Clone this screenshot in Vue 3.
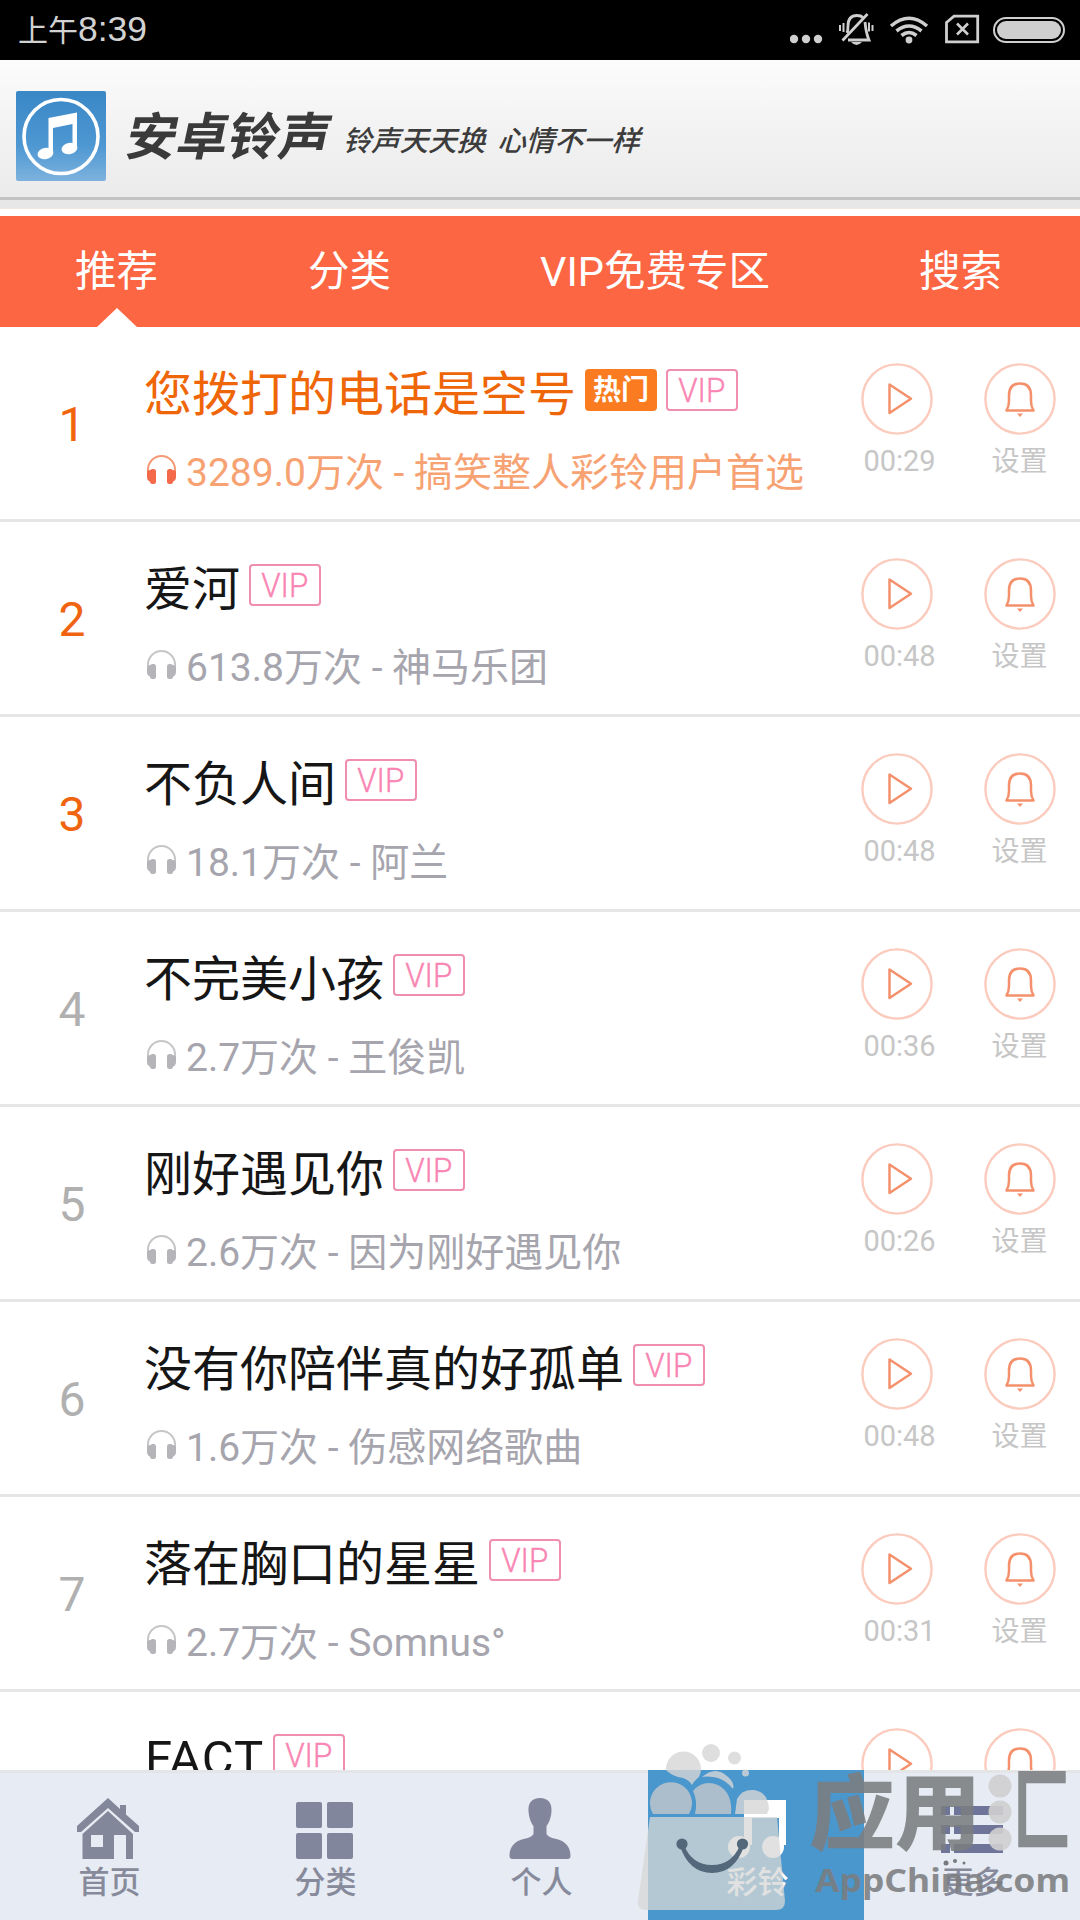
<script setup>
const tabs = ['推荐', '分类', 'VIP免费专区', '搜索']
const songs = [
  { title: '您拨打的电话是空号', plays: '3289.0万次', artist: '搞笑整人彩铃用户首选', time: '00:29', hot: true },
  { title: '爱河', plays: '613.8万次', artist: '神马乐团', time: '00:48' },
  { title: '不负人间', plays: '18.1万次', artist: '阿兰', time: '00:48' },
  { title: '不完美小孩', plays: '2.7万次', artist: '王俊凯', time: '00:36' },
  { title: '刚好遇见你', plays: '2.6万次', artist: '因为刚好遇见你', time: '00:26' },
  { title: '没有你陪伴真的好孤单', plays: '1.6万次', artist: '伤感网络歌曲', time: '00:48' },
  { title: '落在胸口的星星', plays: '2.7万次', artist: 'Somnus°', time: '00:31' },
  { title: 'FACT', latin: true },
]
</script>

<template>
  <div class="screen">
    <div class="status">
      <span class="clock"><span class="ampm">上午</span>8:39</span>
      <svg class="sys" width="290" height="60" viewBox="790 0 290 60" fill="none" stroke="#cfcfcf">
        <g fill="#cfcfcf" stroke="none">
          <circle cx="794" cy="39" r="4.2" /><circle cx="806" cy="39" r="4.2" /><circle cx="818" cy="39" r="4.2" />
          <circle cx="909" cy="40" r="3.400" />
          <path d="M851 42h11q-5.500 6-11 0z" />
        </g>
        <path d="M842.500 40.500l25-26.500" stroke-width="2.800" />
        <path d="M847 33q1-2 1-7 0-10.500 9-10.500 4 0 6 2M865 22q1 11 4 18h-21" stroke-width="2.800" />
        <path d="M843.500 23v9M840 25v6M869 22.500v9M872.500 25v6" stroke-width="2" />
        <path d="M891 26q18-15.500 36 0M896.500 31q12.500-10 25 0M901.500 35.500q7.500-6 15 0" stroke-width="3.600" />
        <path d="M946.500 22.500l7.500-6.300h23.700v25.600h-31.200z" stroke-width="2.800" />
        <path d="M957 23.500l11 11M968 23.500l-11 11" stroke-width="2.600" />
        <rect x="994" y="18" width="70" height="24" rx="12" stroke-width="2" />
        <rect x="997" y="21" width="64" height="18" rx="9" fill="#cfcfcf" stroke="none" />
      </svg>
    </div>

    <header class="brand">
      <svg class="logo" width="90" height="90" viewBox="0 0 90 90">
        <defs>
          <linearGradient id="logoBg" x1="0" y1="0" x2="0" y2="1">
            <stop offset="0" stop-color="#3a87c6" /><stop offset=".6" stop-color="#4d97d2" /><stop offset="1" stop-color="#7db2de" />
          </linearGradient>
        </defs>
        <rect width="90" height="90" rx="2" fill="url(#logoBg)" />
        <circle cx="45" cy="45.500" r="37" fill="none" stroke="#fff" stroke-width="3.600" />
        <g fill="#fff">
          <path d="M32.500 27l28.500-5.500v36h-4.500V33L37 37v25h-4.500z" />
          <ellipse cx="29.500" cy="62.500" rx="8" ry="5.500" transform="rotate(-12 29.500 62.500)" />
          <ellipse cx="53.500" cy="57.500" rx="8" ry="5.500" transform="rotate(-12 53.500 57.500)" />
        </g>
      </svg>
      <h1>安卓铃声</h1>
      <p class="slogan"><span>铃声天天换</span><span>心情不一样</span></p>
    </header>
    <div class="ledge"></div>

    <nav class="tabs">
      <div v-for="(t, i) in tabs" :key="t" class="tab" :class="{ wide: i === 2, active: i === 0 }">{{ t }}</div>
    </nav>

    <main class="list">
      <article v-for="(s, i) in songs" :key="i" class="row" :class="{ first: i === 0 }">
        <div class="rank" :class="{ top: i < 3 }">{{ i < 7 ? i + 1 : '' }}</div>
        <div class="info">
          <div class="title">
            <span :class="{ latin: s.latin }">{{ s.title }}</span>
            <b v-if="s.hot" class="hot">热门</b>
            <i class="vip"><span>VIP</span></i>
          </div>
          <div v-if="s.plays" class="sub">
            <svg width="31" height="31" viewBox="0 0 31 31">
              <path class="band" d="M2 20v-4.500a13.500 13.500 0 0 1 27 0V20" fill="none" stroke-width="2" />
              <g class="cups">
                <path d="M1 18q0-2 4-2v12q-4-1-4-5z" /><rect x="4" y="15" width="6" height="15" rx="2.500" />
                <path d="M30 18q0-2-4-2v12q4-1 4-5z" /><rect x="21" y="15" width="6" height="15" rx="2.500" />
              </g>
            </svg>
            <span>{{ s.plays }} - {{ s.artist }}</span>
          </div>
        </div>
        <div class="action play">
          <svg width="72" height="72" viewBox="0 0 72 72" fill="none">
            <circle cx="36" cy="36" r="34.600" stroke="#fbcbbd" stroke-width="2.400" />
            <path d="M28.500 21.500v28.500l21.500-14.200z" stroke="#f4916c" stroke-width="2.500" stroke-linejoin="round" />
          </svg>
          <span v-if="s.time">{{ s.time }}</span>
        </div>
        <div class="action set">
          <svg width="72" height="72" viewBox="0 0 72 72" fill="none">
            <circle cx="36" cy="36" r="34.600" stroke="#fbcbbd" stroke-width="2.400" />
            <path d="M22.500 47.500h27q-2.500-4-2.500-9.500v-5.500q0-12-11-12t-11 12V38q0 5.500-2.500 9.500z" stroke="#f4916c" stroke-width="2.500" stroke-linejoin="round" />
            <path d="M33 50.500h6l-3 3.500z" fill="#f4916c" />
          </svg>
          <span v-if="s.time">设置</span>
        </div>
      </article>
    </main>

    <footer class="dock">
      <div class="item">
        <svg width="62" height="62" viewBox="0 0 62 62" fill="#82879a">
          <path d="M0 28L31 0l12 11V7h6v9.500L62 28v6h-4L31 10 4 34H0z" />
          <path d="M5.500 36L31 13l25 23v25h-7V37H37v24H5.500zM14 37v12h12V37z" fill-rule="evenodd" />
        </svg>
        <span>首页</span>
      </div>
      <div class="item">
        <svg width="62" height="62" viewBox="0 0 62 62" fill="#82869d">
          <rect x="3" y="4" width="26" height="26" rx="2" /><rect x="34" y="4" width="26" height="26" rx="2" />
          <rect x="3" y="35" width="26" height="26" rx="2" /><rect x="34" y="35" width="26" height="26" rx="2" />
        </svg>
        <span>分类</span>
      </div>
      <div class="item">
        <svg width="62" height="62" viewBox="0 0 62 62" fill="#82869d">
          <path d="M31 0c8 0 12 5 11.500 13-.3 6-2.500 12-5 15v8c2 3 5 4 10 5 9 2 14 8 14 17q0 3-3 3h-55q-3 0-3-3c0-9 5-15 14-17 5-1 8-2 10-5v-8c-2.500-3-4.700-9-5-15C19 5 23 0 31 0z" />
        </svg>
        <span>个人</span>
      </div>
      <div class="item on">
        <svg width="62" height="62" viewBox="0 0 62 62" fill="#fff">
          <path d="M17 2h42v45h-7V20H25v27h-8z" /><circle cx="12" cy="49" r="11" /><circle cx="46" cy="49" r="11" />
        </svg>
        <span>彩铃</span>
      </div>
      <div class="item">
        <svg width="62" height="62" viewBox="0 0 62 62" fill="#6f7598">
          <rect y="8" width="9" height="9" /><rect x="13" y="8" width="49" height="9" />
          <rect y="27" width="9" height="9" /><rect x="13" y="27" width="49" height="9" />
          <rect y="46" width="9" height="9" /><rect x="13" y="46" width="49" height="9" />
        </svg>
        <span>更多</span>
      </div>
    </footer>

    <div class="mark">
      <svg width="450" height="180" viewBox="630 1740 450 180">
        <g fill="#d6d6d6" fill-opacity=".8">
          <circle cx="711" cy="1753" r="9" /><circle cx="734.500" cy="1758" r="6.500" /><circle cx="745.500" cy="1773" r="3.500" />
          <path d="M666 1770a17.500 17.500 0 1 1 33 7q-5 4-7 8-4-7-14-8-7-2-12-7z" />
          <path d="M702 1777q14-12 26 0 7 6 5 12-9-11-20-12-7-1-11 0z" />
        </g>
        <g fill="#c4c8ca" fill-opacity=".8">
          <path d="M653 1814a21 21 0 1 1 36 0z" />
          <path d="M695 1814q3-13-2-23 10-12 25-6 15 8 13 29z" />
          <path d="M737 1799q5-10 17-9 14 2 15 19l-2 5h-32z" fill="#d6d6d6" />
        </g>
        <path d="M650 1817h127l8 84q0 9-9 9H646q-9 0-8-9z" fill="#d6d8d6" fill-opacity=".76" />
        <g fill="#53687a">
          <circle cx="682" cy="1844" r="5.600" /><circle cx="742.500" cy="1844" r="5.600" />
          <path d="M680 1846q9 27 32 27t32-27l-4-1q-8 20-28 20t-28-20z" />
        </g>
        <g fill="#77797e"><circle cx="946" cy="1863" r="2.500" /><circle cx="955" cy="1861" r="2" /><circle cx="964" cy="1863" r="1.500" /></g>
        <g class="word">
          <text x="809" y="1843" font-size="82" textLength="86" lengthAdjust="spacingAndGlyphs">应</text>
          <text x="895" y="1843" font-size="84" textLength="86" lengthAdjust="spacingAndGlyphs">用</text>
          <text x="1013" y="1843" font-size="90" textLength="58" lengthAdjust="spacingAndGlyphs">匚</text>
          <text class="site" x="815" y="1892" font-size="32" textLength="255" lengthAdjust="spacingAndGlyphs">AppChina.com</text>
        </g>
        <g fill="#cfcfd0" fill-opacity=".9">
          <circle cx="1000" cy="1786" r="11.500" /><circle cx="1000" cy="1812" r="11.500" /><circle cx="1000" cy="1839" r="11.500" />
        </g>
      </svg>
    </div>
  </div>
</template>

<style>
body { margin: 0; background: #fff; }
</style>

<style scoped>
.screen {
  width: 1080px;
  height: 1920px;
  position: relative;
  overflow: hidden;
  display: flex;
  flex-direction: column;
  background: #fff;
  font-family: Roboto, "Noto Sans CJK SC", sans-serif;
}
.status {
  height: 60px;
  flex: none;
  display: flex;
  justify-content: space-between;
  background: #000;
  color: #d2d2d2;
}
.clock {
  padding-left: 18px;
  font: 35.5px/58px "Liberation Sans", "Noto Sans CJK SC", sans-serif;
}
.ampm { font-size: 30px; }
.brand {
  box-sizing: border-box;
  height: 137px;
  flex: none;
  display: flex;
  align-items: flex-start;
  padding: 31px 0 0 16px;
  background: linear-gradient(#fcfcfc, #f4f4f4 40%, #ebebeb);
}
.logo { flex: none; }
h1 {
  margin: 14px 0 0 22px;
  width: 205px;
  font: 700 51px/56px "Noto Sans CJK SC", sans-serif;
  color: #3a3a3a;
  transform: skewX(-12deg);
  white-space: nowrap;
}
.slogan {
  display: flex;
  gap: 12px;
  margin: 28px 0 0 13px;
  font: 500 28.5px/40px "Noto Sans CJK SC", sans-serif;
  color: #3c3c3c;
  transform: skewX(-16deg);
  white-space: nowrap;
}
.ledge {
  height: 19px;
  flex: none;
  background: linear-gradient(#c3c3c3 0 3px, #e7e7e7 3px 11px, #f3e6e1 11px 12px, #fff 12px);
}
.tabs {
  height: 111px;
  flex: none;
  display: flex;
  background: #fc6643;
  color: #fff;
  font-size: 41.5px;
  line-height: 112px;
}
.tab { width: 233px; text-align: center; position: relative; }
.tab.wide { width: 378px; }
.tab.active::after {
  content: "";
  position: absolute;
  left: 97px;
  bottom: 0;
  border: solid transparent;
  border-width: 0 20px 19px;
  border-bottom-color: #fff;
}
.list { flex: 1; min-height: 0; overflow: hidden; }
.row {
  box-sizing: border-box;
  height: 195px;
  display: flex;
  border-bottom: 3px solid #e6e6e6;
}
.rank {
  width: 144px;
  flex: none;
  text-align: center;
  font-size: 48px;
  line-height: 196px;
  color: #b0b0b0;
}
.rank.top { color: #f0640f; }
.info { flex: 1; padding-top: 39px; white-space: nowrap; }
.title {
  display: flex;
  align-items: flex-start;
  height: 60px;
  font-size: 48px;
  line-height: 58px;
  color: #161616;
}
.first .title { color: #ef6608; }
.latin { padding-left: 1px; font-size: 49px; line-height: 55px; letter-spacing: 1px; }
.hot, .vip {
  box-sizing: border-box;
  width: 72px;
  height: 42px;
  margin: 3px 0 0 9px;
  border-radius: 4px;
  text-align: center;
}
.hot { background: #fa7b20; color: #fff; font-size: 28px; line-height: 44px; }
.vip {
  border: 2px solid #f08db0;
  color: #f985b3;
  font-style: normal;
  font-weight: 300;
  font-size: 33px;
  line-height: 39px;
  -webkit-text-stroke: .4px #f985b3;
}
.vip span { display: inline-block; transform: scaleX(.95); }
.sub {
  display: flex;
  align-items: flex-start;
  gap: 9px;
  height: 48px;
  margin-top: 23px;
  padding-left: 2px;
  font-size: 39px;
  line-height: 48px;
  color: #a6a5ae;
}
.sub svg { flex: none; margin-top: 5px; }
.band { stroke: #c6c6c9; }
.cups { fill: #b5b4b9; }
.first .sub { color: #f7a273; }
.first .band { stroke: #f49a77; }
.first .cups { fill: #f4694a; }
.action {
  width: 119px;
  flex: none;
  display: flex;
  flex-direction: column;
  align-items: center;
  padding-top: 36px;
  font-size: 28px;
  line-height: 34px;
  color: #c6c6c6;
}
.action span { margin-top: 10px; }
.set svg, .set span { margin-right: 2px; }
.play { width: 122px; font-size: 29px; }
.play svg { margin-right: 6px; }
.play span { margin: 9px 1px 0 0; }
.dock {
  box-sizing: border-box;
  height: 150px;
  flex: none;
  display: flex;
  background: linear-gradient(#e3e5e6 0 3px, #e7ebf3 3px);
}
.item {
  width: 216px;
  display: flex;
  flex-direction: column;
  align-items: center;
  padding-top: 28px;
  font-size: 31px;
  line-height: 40px;
  font-weight: 500;
  color: #868a9b;
}
.item span { margin: 3px 0 0 3px; }
.item.on { background: #4a97ce; color: #fff; }
.item.on svg { margin-left: 3px; }
.mark { position: absolute; left: 630px; top: 1740px; height: 180px; }
.word {
  fill: #7b7d80;
  fill-opacity: .88;
  font-family: "Noto Sans CJK SC", sans-serif;
  font-weight: 900;
}
.site { font-family: "Noto Sans", sans-serif; font-weight: 700; }
</style>
